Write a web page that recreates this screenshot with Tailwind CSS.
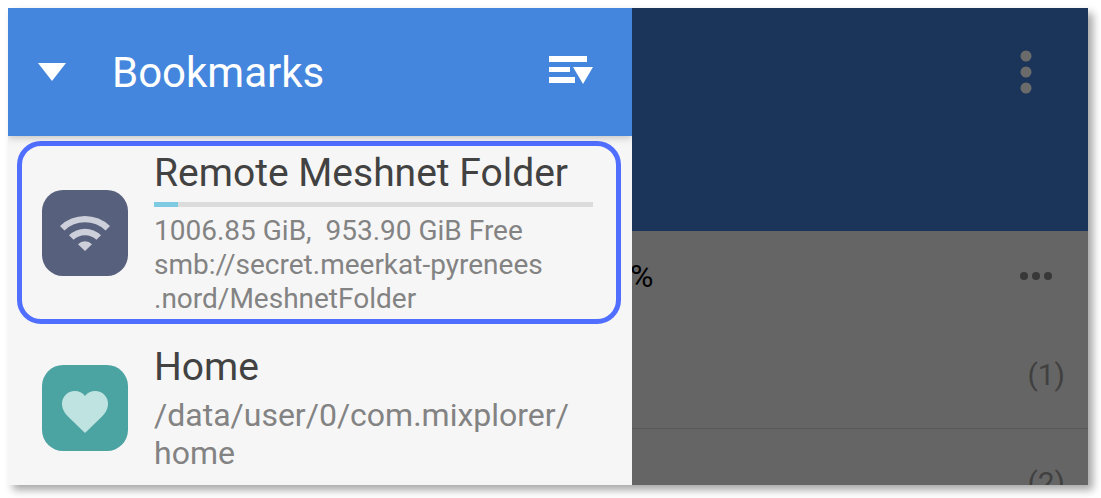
<!DOCTYPE html>
<html lang="en">
  <head>
    <meta charset="UTF-8" />
    <meta name="viewport" content="width=device-width, initial-scale=1.0" />
    <title>Bookmarks</title>
    <script src="https://cdn.jsdelivr.net/npm/@tailwindcss/browser@4"></script>
  </head>
  <body class="h-screen bg-white pt-2 pl-2 pr-[13px] pb-[13px] font-[Roboto,sans-serif]">
    <div class="flex h-full shadow-[5px_5px_8px_rgba(0,0,0,0.35)]">
      <!-- Bookmarks drawer -->
      <aside class="flex w-[624px] shrink-0 flex-col overflow-hidden bg-[#f6f6f6]">
        <header class="z-10 flex h-32 shrink-0 items-center bg-[#4486dd] pr-[39px] pl-[30px] text-white shadow-[0_1px_8px_rgba(0,0,0,0.25)]">
          <button type="button" aria-label="Switch list">
            <svg class="h-[18px] w-7" viewBox="0 0 28 18" fill="currentColor">
              <path d="M0 0h28L14 18z" />
            </svg>
          </button>
          <h1 class="ml-[46px] flex-1 pt-0.5 text-[42px] leading-[48px]">Bookmarks</h1>
          <button type="button" aria-label="Sort bookmarks">
            <svg class="mb-1 h-7 w-11" viewBox="0 0 44 28" fill="currentColor">
              <path d="M0 0h38v6H0zM0 11h21v5H0zM0 21h26v6H0zM24 11h20l-10 17z" />
            </svg>
          </button>
        </header>

        <ul>
          <li class="mt-[5px] mr-[11px] ml-[9px] flex items-center gap-[26px] rounded-[24px] border-5 border-[#506eff] pt-1 pr-[23px] pb-[3px] pl-5">
            <div class="flex size-[86px] shrink-0 items-center justify-center rounded-[21px] bg-[#57607c]">
              <svg class="h-9 w-[50px]" viewBox="0 0 50 36" fill="#cdcfda">
                <path d="M0 11a36 36 0 0 1 50 0l-4.500 4.500a29.500 29.500 0 0 0-41 0z" />
                <path d="M9 20.200a23 23 0 0 1 32 0l-4.600 4.600a16.500 16.500 0 0 0-22.800 0z" />
                <path d="M18 29.200a10 10 0 0 1 14 0L25 36z" />
              </svg>
            </div>
            <div class="min-w-0 flex-1">
              <h2 class="text-[39px] leading-[46px] text-[#424242]">Remote Meshnet Folder</h2>
              <div class="mt-1.5 h-[5px] bg-[#dcdcdc]">
                <div class="h-full w-6 bg-[#7ecae3]"></div>
              </div>
              <p class="mt-[7px] text-[28px] leading-[34px] text-[#838383]">
                1006.85 GiB,&nbsp; 953.90 GiB Free<br />
                smb://secret.meerkat-pyrenees<br />
                .nord/MeshnetFolder
              </p>
            </div>
          </li>

          <li class="mt-5 flex items-center gap-[26px] pr-10 pl-[34px]">
            <div class="flex size-[86px] shrink-0 items-center justify-center rounded-[21px] bg-[#4ba4a2]">
              <svg class="mt-2 h-[42px] w-[46px]" viewBox="0 0 46 42" fill="#bfe3e1">
                <path d="M23 42L6.500 26C2.500 22 0 18 0 12.500A12.600 12.600 0 0 1 12.600 0C17 0 20.500 1.800 23 5C25.500 1.800 29 0 33.400 0A12.600 12.600 0 0 1 46 12.500C46 18 43.500 22 39.500 26z" />
              </svg>
            </div>
            <div class="min-w-0 flex-1">
              <h2 class="text-[39px] leading-[46px] text-[#424242]">Home</h2>
              <p class="mt-1.5 text-[32px] leading-[38px] text-[#838383]">
                /data/user/0/com.mixplorer/<br />
                home
              </p>
            </div>
          </li>
        </ul>
      </aside>

      <!-- Dimmed file list behind the drawer -->
      <main class="flex min-w-0 flex-1 flex-col overflow-hidden bg-[#656565] text-[30px] leading-[34px] text-[#404040]">
        <div class="flex h-[223px] shrink-0 items-start justify-end bg-[#1a3559] pt-[42px] pr-14">
          <button type="button" aria-label="More options">
            <svg class="h-11 w-3" viewBox="0 0 12 44" fill="#6b6b6b">
              <circle cx="6" cy="6" r="5.500" />
              <circle cx="6" cy="22" r="5.500" />
              <circle cx="6" cy="38" r="5.500" />
            </svg>
          </button>
        </div>
        <div class="flex shrink-0 items-center justify-between pt-7 pr-9">
          <span class="-ml-0.5 text-[32px] text-black">%</span>
          <button type="button" aria-label="Storage options">
            <svg class="h-2 w-8" viewBox="0 0 32 8" fill="#383838">
              <circle cx="4" cy="4" r="4" />
              <circle cx="16" cy="4" r="4" />
              <circle cx="28" cy="4" r="4" />
            </svg>
          </button>
        </div>
        <ul class="mt-7 text-right">
          <li class="border-b border-[#585858] pt-[37px] pr-[23px] pb-9">(1)</li>
          <li class="pt-[37px] pr-[23px]">(2)</li>
        </ul>
      </main>
    </div>
  </body>
</html>
